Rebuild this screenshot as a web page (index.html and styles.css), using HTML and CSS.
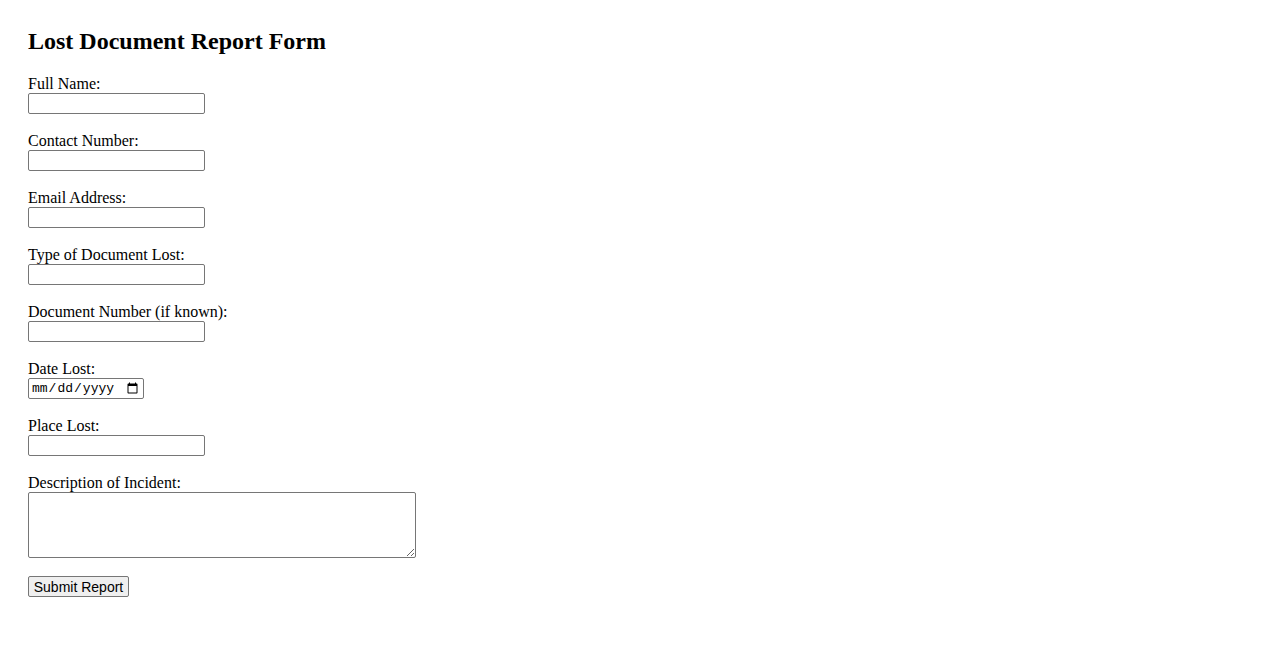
FILE: index.html
```html
<!DOCTYPE html>
<html lang="en">
<head>
<meta charset="utf-8">
<title>Lost Document Report Form</title>
<link rel="stylesheet" href="styles.css">
</head>
<body>
<div class="page">
  <h2 class="title">Lost Document Report Form</h2>
  <form class="report-form">
    <div class="field">
      <label class="field-label" for="name">Full Name:</label>
      <input class="text-input" type="text" id="name">
    </div>
    <div class="field">
      <label class="field-label" for="contact">Contact Number:</label>
      <input class="text-input" type="text" id="contact">
    </div>
    <div class="field">
      <label class="field-label" for="email">Email Address:</label>
      <input class="text-input" type="text" id="email">
    </div>
    <div class="field">
      <label class="field-label" for="type">Type of Document Lost:</label>
      <input class="text-input" type="text" id="type">
    </div>
    <div class="field">
      <label class="field-label" for="number">Document Number (if known):</label>
      <input class="text-input" type="text" id="number">
    </div>
    <div class="field">
      <label class="field-label" for="date">Date Lost:</label>
      <input class="date-input" type="date" id="date">
    </div>
    <div class="field">
      <label class="field-label" for="place">Place Lost:</label>
      <input class="text-input" type="text" id="place">
    </div>
    <div class="field">
      <label class="field-label" for="desc">Description of Incident:</label>
      <textarea class="text-area" id="desc"></textarea>
    </div>
    <div class="actions">
      <button class="submit-btn" type="submit">Submit Report</button>
    </div>
  </form>
</div>
</body>
</html>
```
FILE: styles.css
```css
html, body {
  background: #ffffff;
}
body {
  margin: 8px;
  font-family: "Liberation Serif", "Times New Roman", serif;
  font-size: 16px;
  color: #000000;
}
.page {
  padding: 19px 20px 20px 20px;
}
.title {
  margin: 0 0 20px 0;
  font-size: 24px;
  font-weight: bold;
  line-height: 28px;
}
.report-form {
  display: flex;
  flex-direction: column;
}
.field {
  display: flex;
  flex-direction: column;
  align-items: flex-start;
  margin-bottom: 18px;
}
.field-label {
  display: block;
  line-height: 18px;
}
.text-input {
  box-sizing: border-box;
  width: 177px;
  height: 21px;
  margin: 0;
  padding: 1px 2px;
  border: 1px solid #767676;
  border-radius: 2px;
  font-family: "Liberation Sans", Arial, sans-serif;
  font-size: 13.33px;
  background: #ffffff;
}
.date-input {
  box-sizing: border-box;
  width: 116px;
  height: 21px;
  margin: 0;
  padding: 1px 2px;
  border: 1px solid #767676;
  border-radius: 2px;
  font-family: "Liberation Mono", "DejaVu Sans Mono", monospace;
  font-size: 13px;
  background: #ffffff;
}
.text-area {
  box-sizing: border-box;
  width: 388px;
  height: 66px;
  margin: 0;
  padding: 2px;
  border: 1px solid #767676;
  border-radius: 2px;
  font-family: "Liberation Mono", monospace;
  font-size: 13.33px;
  resize: both;
}
.actions {
  display: flex;
}
.submit-btn {
  box-sizing: border-box;
  width: 101px;
  height: 21px;
  padding: 0;
  margin: 0;
  border: 1px solid #767676;
  border-radius: 2px;
  background: #efefef;
  font-family: "Liberation Sans", Arial, sans-serif;
  font-size: 14px;
  white-space: nowrap;
  color: #000000;
}
```
